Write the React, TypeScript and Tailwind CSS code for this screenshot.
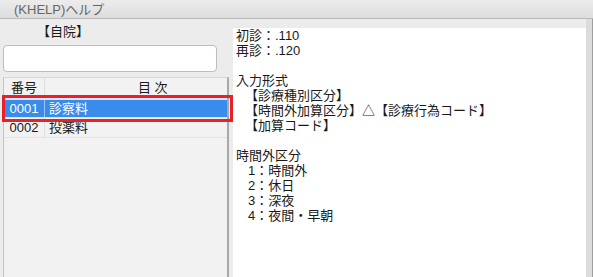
import React from "react";

const rows = [
  { no: "0001", name: "診察料" },
  { no: "0002", name: "投薬料" },
];

const helpLines: { text: string; indent?: string }[] = [
  { text: "初診：.110" },
  { text: "再診：.120" },
  { text: "" },
  { text: "入力形式" },
  { text: "【診療種別区分】", indent: "pl-[9px]" },
  { text: "【時間外加算区分】△【診療行為コード】", indent: "pl-[9px]" },
  { text: "【加算コード】", indent: "pl-[9px]" },
  { text: "" },
  { text: "時間外区分" },
  { text: "1：時間外", indent: "pl-[12px]" },
  { text: "2：休日", indent: "pl-[12px]" },
  { text: "3：深夜", indent: "pl-[12px]" },
  { text: "4：夜間・早朝", indent: "pl-[12px]" },
];

const App = () => {
  return (
    <div className="w-[593px] h-[277px] overflow-hidden bg-[#ececec] flex flex-col font-['Liberation_Sans','Noto_Sans_CJK_JP',sans-serif] text-[#1a1a1a]">
      {/* title bar */}
      <div className="h-[19px] shrink-0 bg-gradient-to-b from-[#ececec] to-[#dddddd] border-b border-[#b9b9b9] flex items-center pl-[14px]">
        <span className="text-[13px] leading-none text-[#666666]">(KHELP)ヘルプ</span>
      </div>

      <div className="flex flex-1 min-h-0">
        {/* left panel */}
        <div className="w-[233px] shrink-0 flex flex-col pl-[3px]">
          <div className="h-[26px] flex items-center pl-[34px] text-[13px]">【自院】</div>
          <div className="h-[27px] w-[214px] bg-white border border-[#bdbdbd] rounded-[4px]" />
          <div className="relative mt-[5px] w-[226px] flex-1 bg-[#f2f2f2] border-l border-[#c4c4c4] border-r-2 border-r-[#a9a9a9] border-t border-t-[#d6d6d6]">
            <div className="flex h-[20px] items-center text-[13px] border-b border-[#e6e6e6]">
              <div className="w-[41px] h-full flex items-center justify-center pt-[1px] border-r border-[#dedede]">番号</div>
              <div className="flex-1 pl-[93px] pt-[1px]">目 次</div>
            </div>
            {rows.map((row, i) => (
              <div
                key={row.no}
                className={`flex h-[20px] items-center text-[13px] border-b border-[#e3e3e3] ${
                  i === 0 ? "bg-[#3a8cec] text-white border-y-2 border-y-[#d9e6f5]" : ""
                }`}
              >
                <div className={`w-[41px] h-full flex items-center justify-center border-r ${i === 0 ? "border-[#9fc4f2]" : "border-[#dedede]"}`}>
                  {row.no}
                </div>
                <div className="flex-1 pl-[4px]">{row.name}</div>
              </div>
            ))}
            {/* red highlight annotation */}
            <div className="absolute left-[-2px] top-[17px] w-[231px] h-[27px] border-[3px] border-[#e8202a]" />
          </div>
        </div>

        {/* help text */}
        <div className="flex-1 mt-[9px] bg-white pl-[3px] text-[13px] leading-[15px]">
          {helpLines.map((line, i) => (
            <div key={i} className={`h-[15px] whitespace-pre ${line.indent ?? ""}`}>
              {line.text}
            </div>
          ))}
        </div>

        {/* right frame */}
        <div className="w-[7px] shrink-0 bg-[#dcdcdc] border-r border-[#9e9e9e]" />
      </div>
    </div>
  );
};

export default App;
